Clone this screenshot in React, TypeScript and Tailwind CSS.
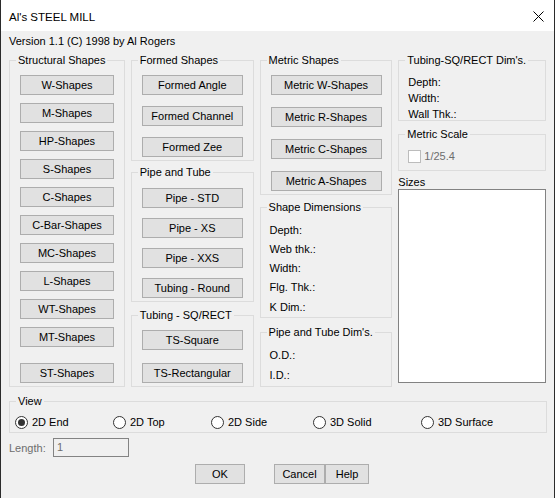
import React from "react";

const edge = "shadow-[inset_1px_0_0_#2b2b2b,inset_-1px_0_0_#2b2b2b]";

const GroupBox = ({ title, className, children }: { title: string; className?: string; children?: React.ReactNode }) => (
  <fieldset className={`border border-[#dcdcdc] min-w-0 ${className ?? ""}`}>
    <legend className="ml-[6px] px-[2px] leading-[14px]">{title}</legend>
    {children}
  </fieldset>
);

const Btn = ({ label, className }: { label: string; className?: string }) => (
  <button className={`block h-[20px] bg-[#e1e1e1] border border-[#adadad] leading-[18px] text-center ${className ?? ""}`}>
    {label}
  </button>
);

const Radio = ({ label, checked, className }: { label: string; checked?: boolean; className?: string }) => (
  <div className={`flex items-center gap-[4px] ${className ?? ""}`}>
    <span className="w-[13px] h-[13px] rounded-full border border-[#333] bg-white flex items-center justify-center">
      {checked && <span className="w-[7px] h-[7px] rounded-full bg-[#333]" />}
    </span>
    <span className="leading-[14px]">{label}</span>
  </div>
);

const structural = ["W-Shapes", "M-Shapes", "HP-Shapes", "S-Shapes", "C-Shapes", "C-Bar-Shapes", "MC-Shapes", "L-Shapes", "WT-Shapes", "MT-Shapes"];

export default function App() {
  return (
    <div className={`w-[555px] h-[498px] bg-[#f0f0f0] text-black text-[11px] font-['Liberation_Sans',Arial,sans-serif] ${edge}`}>
      {/* title bar */}
      <div className={`h-[31px] bg-white flex items-center justify-between pl-[9px] pr-[11px] ${edge}`}>
        <span className="text-[11.5px] leading-[14px] mt-[2px]">Al's STEEL MILL</span>
        <svg width="11" height="11" viewBox="0 0 11 11" className="mt-[1px]">
          <path d="M0.5 0.5 L10.5 10.5 M10.5 0.5 L0.5 10.5" stroke="#000" strokeWidth="1" fill="none" />
        </svg>
      </div>

      <div className="px-[9px]">
        <div className="pt-[3px] leading-[14px]">Version 1.1 (C) 1998 by Al Rogers</div>

        {/* main columns */}
        <div className="flex gap-[6px] mt-[5px] h-[334px]">
          <GroupBox title="Structural Shapes" className="w-[116px] h-[334px]">
            <div className="flex flex-col gap-[8px] pl-[10px] pt-[8px]">
              {structural.map((s) => (
                <Btn key={s} label={s} className="w-[94px]" />
              ))}
              <Btn label="ST-Shapes" className="w-[94px] mt-[8px]" />
            </div>
          </GroupBox>

          <div className="flex flex-col w-[123px]">
            <GroupBox title="Formed Shapes" className="h-[108px]">
              <div className="flex flex-col gap-[11px] pl-[10px] pt-[8px]">
                <Btn label="Formed Angle" className="w-[101px]" />
                <Btn label="Formed Channel" className="w-[101px]" />
                <Btn label="Formed Zee" className="w-[101px]" />
              </div>
            </GroupBox>
            <GroupBox title="Pipe and Tube" className="h-[137px] mt-[4px]">
              <div className="flex flex-col gap-[10px] pl-[10px] pt-[9px]">
                <Btn label="Pipe - STD" className="w-[101px]" />
                <Btn label="Pipe - XS" className="w-[101px]" />
                <Btn label="Pipe - XXS" className="w-[101px]" />
                <Btn label="Tubing - Round" className="w-[101px]" />
              </div>
            </GroupBox>
            <GroupBox title="Tubing - SQ/RECT" className="h-[79px] mt-[6px]">
              <div className="flex flex-col gap-[13px] pl-[10px] pt-[8px]">
                <Btn label="TS-Square" className="w-[101px]" />
                <Btn label="TS-Rectangular" className="w-[101px]" />
              </div>
            </GroupBox>
          </div>

          <div className="flex flex-col w-[133px]">
            <GroupBox title="Metric Shapes" className="h-[142px]">
              <div className="flex flex-col gap-[12px] pl-[10px] pt-[8px]">
                <Btn label="Metric W-Shapes" className="w-[111px]" />
                <Btn label="Metric R-Shapes" className="w-[111px]" />
                <Btn label="Metric C-Shapes" className="w-[111px]" />
                <Btn label="Metric A-Shapes" className="w-[111px]" />
              </div>
            </GroupBox>
            <GroupBox title="Shape Dimensions" className="h-[118px] mt-[5px]">
              <div className="pl-[9px] pt-[7px] leading-[19px]">
                <div>Depth:</div>
                <div>Web thk.:</div>
                <div>Width:</div>
                <div>Flg. Thk.:</div>
                <div className="mt-[1px]">K Dim.:</div>
              </div>
            </GroupBox>
            <GroupBox title="Pipe and Tube Dim's." className="h-[62px] mt-[7px]">
              <div className="pl-[9px] pt-[6px] leading-[20px]">
                <div>O.D.:</div>
                <div>I.D.:</div>
              </div>
            </GroupBox>
          </div>

          <div className="flex flex-col w-[148px]">
            <GroupBox title="Tubing-SQ/RECT Dim's." className="h-[68px]">
              <div className="pl-[9px] pt-[7px] leading-[16px]">
                <div>Depth:</div>
                <div>Width:</div>
                <div>Wall Thk.:</div>
              </div>
            </GroupBox>
            <GroupBox title="Metric Scale" className="h-[44px] mt-[6px]">
              <div className="flex items-center gap-[3px] pl-[9px] pt-[9px]">
                <span className="w-[13px] h-[13px] border border-[#bcbcbc] bg-white" />
                <span className="text-[#6d6d6d] leading-[13px]">1/25.4</span>
              </div>
            </GroupBox>
            <div className="mt-[5px] leading-[13px]">Sizes</div>
            <div className="h-[194px] border border-[#828282] bg-white" />
          </div>
        </div>

        {/* view */}
        <GroupBox title="View" className="h-[39px] mt-[7px] w-[538px]">
          <div className="flex pl-[5px] pt-[7px]">
            <Radio label="2D End" checked className="w-[98px]" />
            <Radio label="2D Top" className="w-[98px]" />
            <Radio label="2D Side" className="w-[102px]" />
            <Radio label="3D Solid" className="w-[108px]" />
            <Radio label="3D Surface" />
          </div>
        </GroupBox>

        {/* length */}
        <div className="flex items-center mt-[5px] h-[19px]">
          <span className="w-[44px] text-[#6d6d6d] leading-[14px]">Length:</span>
          <div className="w-[76px] h-[19px] border border-[#838383] text-[#6d6d6d] pl-[3px] leading-[17px]">1</div>
        </div>

        {/* dialog buttons */}
        <div className="flex mt-[7px]">
          <Btn label="OK" className="w-[50px] ml-[186px]" />
          <Btn label="Cancel" className="w-[51px] ml-[29px]" />
          <Btn label="Help" className="w-[44px]" />
        </div>
      </div>
    </div>
  );
}
